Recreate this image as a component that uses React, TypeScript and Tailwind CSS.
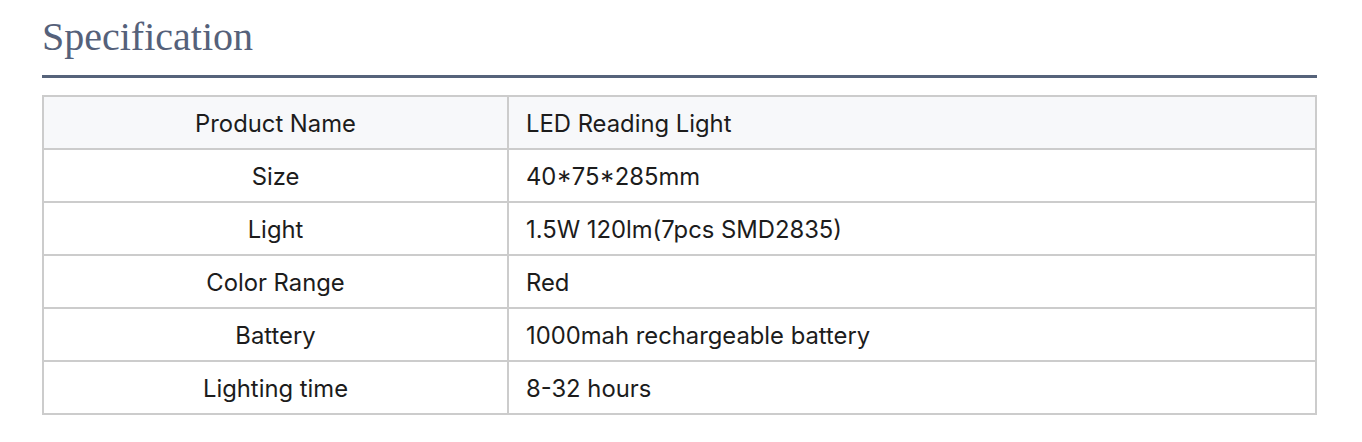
import React from "react";

const rows: [string, string][] = [
  ["Product Name", "LED Reading Light"],
  ["Size", "40*75*285mm"],
  ["Light", "1.5W 120lm(7pcs SMD2835)"],
  ["Color Range", "Red"],
  ["Battery", "1000mah rechargeable battery"],
  ["Lighting time", "8-32 hours"],
];

export default function App() {
  return (
    <div className="w-[1362px] h-[442px] bg-white px-[42px] pt-[13px]">
      <h2
        className="text-[40px] leading-[48px] pb-[14px] border-b-[3px] border-[#56637a] text-[#55617a] font-normal w-[1275px]"
        style={{ fontFamily: '"Liberation Serif", "Times New Roman", serif' }}
      >
        Specification
      </h2>
      <table
        className="mt-[17px] w-[1275px] border-collapse text-[23.8px] leading-[28px] text-[#1c1c1c]"
        style={{ fontFamily: 'Inter, "Noto Sans", sans-serif' }}
      >
        <tbody>
          {rows.map(([k, v], i) => (
            <tr key={k} className={i === 0 ? "bg-[#f7f8fa]" : "bg-white"}>
              <td className="border-2 border-[#cccccc] w-[465px] h-[53px] text-center p-0 pt-[2px]">
                {k}
              </td>
              <td className="border-2 border-[#cccccc] h-[53px] text-left pl-[17px] py-0 pt-[2px]">
                {v}
              </td>
            </tr>
          ))}
        </tbody>
      </table>
    </div>
  );
}
